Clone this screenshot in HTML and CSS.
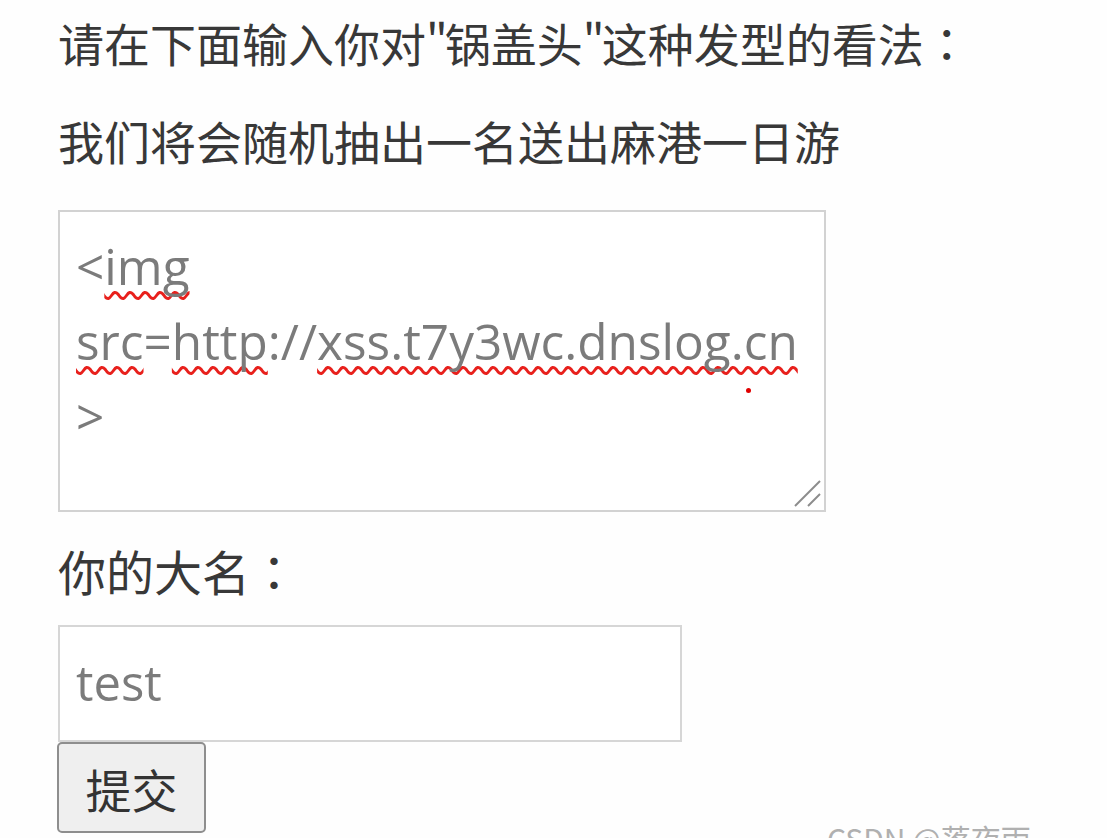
FILE: index.html
```html
<!DOCTYPE html>
<html lang="zh-CN">
<head>
<meta charset="utf-8">
<title>留言</title>
<link rel="stylesheet" href="styles.css">
</head>
<body>
<main class="page">
  <p class="line">请在下面输入你对<span class="quote">"</span>锅盖头<span class="quote">"</span>这种发型的看法<span class="colon" lang="zh-TW">：</span></p>
  <p class="line second">我们将会随机抽出一名送出麻港一日游</p>
  <div class="textarea" role="textbox" aria-multiline="true">
    <div class="ta-line">&lt;<span class="spell">img</span></div>
    <div class="ta-line"><span class="spell">src</span>=<span class="spell">http</span>://<span class="spell">xss.t7y3wc.dnslog.cn</span></div>
    <div class="ta-line">&gt;</div>
    <span class="cursor-dot"></span>
    <svg class="grip" width="30" height="30" viewBox="0 0 30 30">
      <line x1="3" y1="28" x2="28" y2="3" stroke="#8c8c8c" stroke-width="2"/>
      <line x1="16" y1="28" x2="28" y2="16" stroke="#8c8c8c" stroke-width="2"/>
    </svg>
  </div>
  <p class="line label">你的大名<span class="colon" lang="zh-TW">：</span></p>
  <div class="input">test</div>
  <button class="submit" type="button">提交</button>
</main>
<div class="watermark">CSDN @落夜雨</div>
</body>
</html>
```
FILE: styles.css
```css
html, body {
  margin: 0;
  padding: 0;
  background: #fefefe;
}
body {
  position: relative;
  height: 838px;
  overflow: hidden;
  font-family: "Noto Sans CJK SC", "Noto Sans", sans-serif;
  color: #333333;
}
.page {
  padding-left: 58px;
  display: flex;
  flex-direction: column;
  align-items: flex-start;
}
.line {
  margin: 0;
  font-size: 46px;
  line-height: 84px;
  height: 84px;
  white-space: nowrap;
  color: #383838;
}
.quote {
  letter-spacing: -3px;
}
.colon {
  font-family: "Noto Sans CJK TC", "Noto Sans CJK SC", sans-serif;
}
.second {
  margin-top: 14px;
}
.textarea {
  position: relative;
  margin-top: 28px;
  width: 748px;
  height: 281px;
  border: 2px solid #d2d2d2;
  padding: 17px 0 0 16px;
  background: #ffffff;
  font-family: "Open Sans", "Noto Sans", sans-serif;
  font-size: 49.5px;
  line-height: 75px;
  color: #7b7b7b;
}
.ta-line {
  white-space: nowrap;
  height: 75px;
}
.spell {
  text-decoration: underline wavy #e8201c;
  text-decoration-thickness: 2.5px;
  text-decoration-skip-ink: none;
  text-underline-offset: 6px;
}
.cursor-dot {
  position: absolute;
  left: 686px;
  top: 176px;
  width: 5px;
  height: 5px;
  border-radius: 50%;
  background: #e00000;
}
.grip {
  position: absolute;
  right: 2px;
  bottom: 2px;
}
.label {
  margin-top: 16px;
  font-size: 48px;
}
.input {
  margin-top: 13px;
  width: 604px;
  height: 113px;
  border: 2px solid #d6d6d6;
  padding-left: 16px;
  background: #ffffff;
  font-family: "Open Sans", "Noto Sans", sans-serif;
  font-size: 49px;
  line-height: 111px;
  color: #7b7b7b;
}
.submit {
  margin: 0 0 0 -1px;
  width: 149px;
  height: 91px;
  border: 2px solid #8e8e8e;
  border-radius: 5px;
  background: #efefef;
  font-family: "Noto Sans CJK SC", sans-serif;
  font-size: 46px;
  color: #333333;
  padding: 0;
  line-height: 1;
}
.watermark {
  position: absolute;
  left: 827px;
  top: 818px;
  font-family: "Noto Sans CJK SC", sans-serif;
  font-size: 30px;
  line-height: 40px;
  color: #b0b0b0;
  white-space: nowrap;
}
```
